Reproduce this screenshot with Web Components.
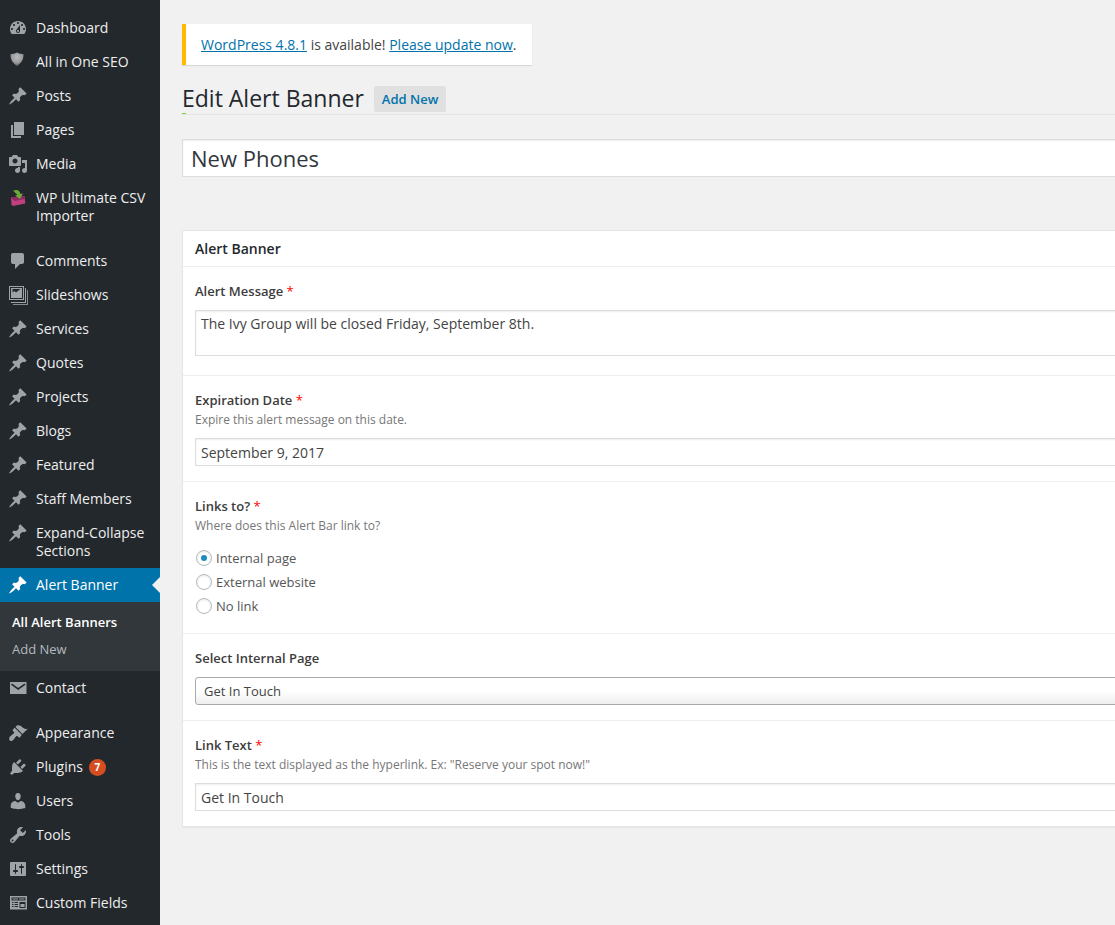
<!DOCTYPE html>
<html lang="en">
<head>
<meta charset="utf-8">
<title>Edit Alert Banner</title>
<style>
html, body { margin: 0; padding: 0; height: 100%; overflow: hidden; background: #f1f1f1; }
body { font-family: "Open Sans", "Liberation Sans", sans-serif; font-size: 13px; color: #444; }
</style>
</head>
<body>
<wp-shell>
  <wp-sidebar slot="side"></wp-sidebar>
  <wp-notice>
    <a href="#">WordPress 4.8.1</a> is available! <a href="#">Please update now</a>.
  </wp-notice>
  <page-head title="Edit Alert Banner" action="Add New"></page-head>
  <title-box>New Phones</title-box>
  <alert-card heading="Alert Banner">
    <field-row label="Alert Message" required>
      <text-box tall>The Ivy Group will be closed Friday, September 8th.</text-box>
    </field-row>
    <field-row label="Expiration Date" hint="Expire this alert message on this date." required>
      <text-box>September 9, 2017</text-box>
    </field-row>
    <field-row label="Links to?" hint="Where does this Alert Bar link to?" required>
      <radio-list selected="Internal page" options="Internal page|External website|No link"></radio-list>
    </field-row>
    <field-row label="Select Internal Page">
      <select-box>Get In Touch</select-box>
    </field-row>
    <field-row label="Link Text" hint='This is the text displayed as the hyperlink. Ex: "Reserve your spot now!"' required last>
      <text-box>Get In Touch</text-box>
    </field-row>
  </alert-card>
</wp-shell>

<script>
const PIN = '<path d="M10.44 3.02l1.82-1.82 6.36 6.35-1.83 1.82c-1.05-.68-2.48-.57-3.41.36l-.75.75c-.92.93-1.04 2.35-.35 3.41l-1.83 1.82-2.41-2.41-2.8 2.79c-.42.42-3.38 2.71-3.8 2.29s1.86-3.39 2.28-3.81l2.79-2.79L4.1 9.36l1.83-1.82c1.05.69 2.48.57 3.4-.36l.75-.75c.93-.92 1.05-2.35.36-3.41z"/>';

const ICONS = {
  dashboard: '<path d="M3.76 16h12.48c1.1-1.37 1.76-3.11 1.76-5 0-4.42-3.58-8-8-8s-8 3.58-8 8c0 1.89.66 3.63 1.76 5zM10 4c.55 0 1 .45 1 1s-.45 1-1 1-1-.45-1-1 .45-1 1-1zM6 6c.55 0 1 .45 1 1s-.45 1-1 1-1-.45-1-1 .45-1 1-1zm8 0c.55 0 1 .45 1 1s-.45 1-1 1-1-.45-1-1 .45-1 1-1zm-5.37 5.55L12 7v6c0 1.1-.9 2-2 2s-2-.9-2-2c0-.57.24-1.08.63-1.45zM4 10c.55 0 1 .45 1 1s-.45 1-1 1-1-.45-1-1 .45-1 1-1zm12 0c.55 0 1 .45 1 1s-.45 1-1 1-1-.45-1-1 .45-1 1-1zm-5 3c0-.55-.45-1-1-1s-1 .45-1 1 .45 1 1 1 1-.45 1-1z" fill-rule="evenodd"/>',
  seo: '<defs><radialGradient id="sh" cx=".5" cy=".35" r=".7"><stop offset="0" stop-color="#b9bbbd"/><stop offset=".6" stop-color="#97999b"/><stop offset="1" stop-color="#4f5153"/></radialGradient></defs><path fill="url(#sh)" d="M9 .5c2 1 4 1.500 6 1.500.4 0 .6.2.6.6 0 5-2.500 9-6.600 11.400-4.100-2.400-6.600-6.400-6.600-11.400 0-.4.2-.6.6-.6 2 0 4-.5 6-1.500z"/>',
  pin: PIN,
  pages: '<path d="M6 15V2h10v13H6zm-1 1h8v2H3V5h2v11z"/>',
  media: '<path d="M13 11V4c0-.55-.45-1-1-1h-1.670L9 1H5L3.670 3H2c-.55 0-1 .45-1 1v7c0 .55.45 1 1 1h10c.55 0 1-.45 1-1zM7 4.500c1.380 0 2.500 1.120 2.500 2.500S8.380 9.500 7 9.500 4.500 8.380 4.500 7 5.620 4.500 7 4.500zM14 6h5v10.500c0 1.380-1.120 2.500-2.500 2.500S14 17.880 14 16.500s1.120-2.500 2.500-2.500c.17 0 .34.02.5.05V9h-3V6zm-4 8.050V13h2v3.500c0 1.380-1.120 2.500-2.500 2.500S7 17.880 7 16.500 8.120 14 9.500 14c.17 0 .34.02.5.05z"/>',
  csv: '<path d="M3 9.500l13.500-1.500.8 7.500L5 18l-1.500-1.500z" fill="#c0407f"/><path d="M3 9.500l3.500 3.500 10.500-2-.5-3z" fill="#8d2a63"/><path d="M5 2.500l4-.5c2 .5 3 2 3.500 4l2.500-.5-3 5.500-5-3.500 2.500-.5C9 6.500 7.500 5 5 2.500z" fill="#6fa83a"/>',
  comments: '<path d="M5 2h9c1.100 0 2 .9 2 2v7c0 1.100-.9 2-2 2h-2l-5 5v-5H5c-1.100 0-2-.9-2-2V4c0-1.100.9-2 2-2z"/>',
  slides: '<path d="M1 1h15v14H1zM2 2v12h13V2z" fill-rule="evenodd"/><path d="M3 3h11v10H3zM4.500 4v3.500l2-1.500 1.500 1.500 4.500-3.500z" fill-rule="evenodd"/><path d="M17 3h1v15H3v-1h14z"/><path d="M19 5h1v15H5v-1h14z" opacity=".8"/>',
  mail: '<path d="M2 4h16.500v12H2z"/><path d="M3.500 6.200L10.200 11l6.800-4.800" fill="none" stroke="#23282d" stroke-width="1.600"/>',
  brush: '<path d="M14.480 11.060L7.410 3.990l1.500-1.500c.5-.56 2.300-.47 3.510.32 1.210.8 1.430 1.280 2.910 2.100 1.180.64 2.450 1.260 4.450.85zm-.71.71L6.700 4.700 4.930 6.470c-.39.39-.39 1.020 0 1.410l1.060 1.060c.39.39.39 1.030 0 1.420-.6.6-1.430 1.110-2.210 1.690-.35.26-.7.53-1.010.84C1.430 13.230.78 15.600 1.440 16.900c.3.59.95 1.070 1.590 1.070.78 0 1.580-.53 2.610-1.560.31-.31.58-.66.84-1.010.58-.78 1.090-1.610 1.690-2.210.39-.39 1.030-.39 1.420 0l1.060 1.060c.39.39 1.020.39 1.410 0z"/>',
  plugin: '<path d="M13.110 4.360L9.870 7.600 8 5.730l3.240-3.240c.35-.34 1.050-.2 1.560.32.52.51.66 1.210.31 1.550zm-8 1.770l.91-1.120 9.010 9.010-1.190.84c-.71.71-2.630 1.160-3.820 1.160H6.140L4.900 17.260c-.59.59-1.540.59-2.120 0-.59-.58-.59-1.530 0-2.120l1.240-1.240v-3.880c0-1.130.4-3.190 1.090-3.890zm7.260 3.970l3.240-3.240c.34-.35 1.040-.21 1.550.31.52.51.66 1.210.31 1.550l-3.240 3.250z"/>',
  users: '<path d="M10 9.250c-2.270 0-2.730-3.440-2.730-3.440C7 4.020 7.820 2 9.970 2c2.160 0 2.980 2.020 2.710 3.810 0 0-.41 3.440-2.680 3.440zm0 2.570L12.720 10c2.390 0 4.520 2.330 4.520 4.530v2.490s-3.650 1.130-7.240 1.130c-3.650 0-7.240-1.130-7.240-1.130v-2.490c0-2.250 1.940-4.480 4.470-4.480z"/>',
  tools: '<path d="M16.680 9.770c-1.340 1.340-3.300 1.670-4.950.99l-5.410 6.520c-.99.99-2.590.99-3.580 0s-.99-2.590 0-3.570l6.520-5.420c-.68-1.650-.35-3.610.99-4.950 1.280-1.280 3.120-1.620 4.720-1.060l-2.890 2.890 2.820 2.820 2.860-2.870c.53 1.580.18 3.390-1.080 4.650zM3.810 16.210c.4.39 1.040.39 1.430 0 .4-.4.4-1.040 0-1.430-.39-.4-1.030-.4-1.430 0-.39.39-.39 1.030 0 1.430z"/>',
  settings: '<path d="M18 16V4c0-.55-.45-1-1-1H3c-.55 0-1 .45-1 1v12c0 .55.45 1 1 1h14c.55 0 1-.45 1-1zM8 11h1c.55 0 1 .45 1 1s-.45 1-1 1H8v1.500c0 .28-.22.5-.5.5s-.5-.22-.5-.5V13H6c-.55 0-1-.45-1-1s.45-1 1-1h1V5.500c0-.28.22-.5.5-.5s.5.22.5.5V11zm5-2h-1c-.55 0-1-.45-1-1s.45-1 1-1h1V5.500c0-.28.22-.5.5-.5s.5.22.5.5V7h1c.55 0 1 .45 1 1s-.45 1-1 1h-1v5.500c0 .28-.22.5-.5.5s-.5-.22-.5-.5V9z"/>',
  fields: '<path d="M2 3h17v13.500H2z"/><path fill="#23282d" d="M3.500 4.500h14v3h-14zM4 9h1.500v1H4zM6.500 9H10v1H6.500zM4 11h1.500v1H4zM6.500 11H10v1H6.500zM4 13h1.500v1H4zM6.500 13H10v1H6.500zM11.500 9h6v6h-6z"/><path d="M4.500 5.500h5.500v1H4.500zM11 5.500h5.500v1H11zM12.500 11h4v3h-4z"/>'
};

// single row of the admin menu
class MenuItem extends HTMLElement {
  constructor() {
    super();
    this.attachShadow({ mode: 'open' });
    this.shadowRoot.innerHTML = `
<style>
:host { display: block; position: relative; color: #eee; }
:host([current]) { background: #0073aa; color: #fff; }
:host([gap]) { margin-bottom: 11px; }
.row { display: flex; align-items: flex-start; padding: 8px 0; line-height: 18px; font-size: 14px; }
.ico { flex: 0 0 36px; display: flex; justify-content: center; height: 18px; }
svg { width: 20px; height: 20px; margin-top: -1px; fill: #9ea3a8; }
:host([current]) svg { fill: #fff; }
.label { flex: 1; padding-right: 6px; }
:host([current])::after {
  content: ""; position: absolute; right: 0; top: 9px;
  border: 8px solid transparent; border-right-color: #f1f1f1; border-left-width: 0;
}
.badge {
  display: inline-block; width: 17px; height: 17px; border-radius: 50%; background: #d54e21; color: #fff;
  font-size: 10px; font-weight: 700; line-height: 17px; text-align: center; vertical-align: top; margin: 1px 0 0 6px;
}
</style>
<div class="row"><span class="ico"></span><span class="label"><slot></slot></span></div>`;
  }
  connectedCallback() {
    const name = this.getAttribute('icon');
    this.shadowRoot.querySelector('.ico').innerHTML = `<svg viewBox="0 0 20 20">${ICONS[name] || ''}</svg>`;
    if (this.hasAttribute('badge')) {
      const b = document.createElement('span');
      b.className = 'badge';
      b.textContent = this.getAttribute('badge');
      this.shadowRoot.querySelector('.label').appendChild(b);
    }
  }
}
customElements.define('menu-item', MenuItem);

class WpSidebar extends HTMLElement {
  constructor() {
    super();
    this.attachShadow({ mode: 'open' });
    const items = [
      ['dashboard', 'Dashboard'], ['seo', 'All in One SEO'], ['pin', 'Posts'], ['pages', 'Pages'], ['media', 'Media'],
      ['csv', 'WP Ultimate CSV Importer', 'gap'],
      ['comments', 'Comments'], ['slides', 'Slideshows'], ['pin', 'Services'], ['pin', 'Quotes'], ['pin', 'Projects'],
      ['pin', 'Blogs'], ['pin', 'Featured'], ['pin', 'Staff Members'], ['pin', 'Expand-Collapse Sections'],
      ['pin', 'Alert Banner', 'current'], ['sub'],
      ['mail', 'Contact', 'gap'],
      ['brush', 'Appearance'], ['plugin', 'Plugins', 'badge'], ['users', 'Users'], ['tools', 'Tools'],
      ['settings', 'Settings'], ['fields', 'Custom Fields']
    ];
    const html = items.map(([icon, label, flag]) => {
      if (icon === 'sub') return `<div class="sub"><a class="on">All Alert Banners</a><a>Add New</a></div>`;
      const attr = flag === 'badge' ? 'badge="7"' : (flag || '');
      return `<menu-item icon="${icon}" ${attr}>${label}</menu-item>`;
    }).join('');
    this.shadowRoot.innerHTML = `
<style>
:host { display: block; width: 160px; height: 100%; background: #23282d; padding-top: 11px; box-sizing: border-box; }
.sub { background: #32373c; padding: 7px 0 8px; }
.sub a { display: block; padding: 0 12px; font-size: 13px; line-height: 27px; color: #b4b9be; }
.sub a.on { color: #fff; font-weight: 600; }
</style>${html}`;
  }
}
customElements.define('wp-sidebar', WpSidebar);

class WpShell extends HTMLElement {
  constructor() {
    super();
    this.attachShadow({ mode: 'open' });
    this.shadowRoot.innerHTML = `
<style>
:host { display: flex; height: 925px; width: 100%; overflow: hidden; }
.side { flex: 0 0 160px; }
main { flex: 0 0 1100px; margin-left: 22px; padding-top: 24px; box-sizing: border-box; }
</style>
<div class="side"><slot name="side"></slot></div>
<main><slot></slot></main>`;
  }
}
customElements.define('wp-shell', WpShell);

class WpNotice extends HTMLElement {
  constructor() {
    super();
    this.attachShadow({ mode: 'open' });
    this.shadowRoot.innerHTML = `
<style>
:host { display: block; width: max-content; height: 41px; box-sizing: border-box; background: #fff;
  border-left: 4px solid #ffb900; box-shadow: 0 1px 1px rgba(0,0,0,.1); padding: 11px 16px 0 15px; font-size: 14px; line-height: 20px; color: #444; }
::slotted(a) { color: #0073aa; text-decoration: underline; }
</style><slot></slot>`;
  }
}
customElements.define('wp-notice', WpNotice);

class PageHead extends HTMLElement {
  constructor() {
    super();
    this.attachShadow({ mode: 'open' });
    this.shadowRoot.innerHTML = `
<style>
:host { display: block; }
.top { display: flex; align-items: flex-start; height: 26px; margin-top: 21px; }
h1 { margin: -1px 0 0; font-size: 23px; font-weight: 400; line-height: 26px; color: #23282d; }
a { margin-left: 10px; height: 26px; line-height: 26px; padding: 0 8px; border-radius: 2px; background: #e0e0e0;
  color: #0073aa; font-size: 13px; font-weight: 600; }
.rule { display: flex; height: 2px; margin-top: 1px; }
.rule i { flex: 0 0 4px; background: #7ad03a; height: 1px; }
.rule b { flex: 1; background: #e5e5e5; margin-top: 1px; height: 1px; margin-left: -4px; }
</style>
<div class="top"><h1></h1><a></a></div>
<div class="rule"><i></i><b></b></div>`;
  }
  connectedCallback() {
    this.shadowRoot.querySelector('h1').textContent = this.getAttribute('title');
    this.shadowRoot.querySelector('a').textContent = this.getAttribute('action');
  }
}
customElements.define('page-head', PageHead);

class TitleBox extends HTMLElement {
  constructor() {
    super();
    this.attachShadow({ mode: 'open' });
    this.shadowRoot.innerHTML = `
<style>
:host { display: block; margin-top: 24px; height: 38px; box-sizing: border-box; background: #fff; border: 1px solid #ddd;
  box-shadow: inset 0 1px 2px rgba(0,0,0,.07); padding: 0 8px; font-size: 22px; line-height: 36px; color: #32373c; }
</style><slot></slot>`;
  }
}
customElements.define('title-box', TitleBox);

class AlertCard extends HTMLElement {
  constructor() {
    super();
    this.attachShadow({ mode: 'open' });
    this.shadowRoot.innerHTML = `
<style>
:host { display: block; margin-top: 53px; background: #fff; border: 1px solid #e5e5e5; box-shadow: 0 1px 1px rgba(0,0,0,.04); }
h2 { margin: 0; box-sizing: border-box; padding: 9px 12px 0; font-size: 14px; line-height: 18px; font-weight: 600; color: #23282d;
  border-bottom: 1px solid #eee; height: 36px; }
</style>
<h2></h2><slot></slot>`;
  }
  connectedCallback() {
    this.shadowRoot.querySelector('h2').textContent = this.getAttribute('heading');
  }
}
customElements.define('alert-card', AlertCard);

class FieldRow extends HTMLElement {
  constructor() {
    super();
    this.attachShadow({ mode: 'open' });
    this.shadowRoot.innerHTML = `
<style>
:host { display: block; padding: 15px 12px; border-bottom: 1px solid #eee; }
:host([last]) { border-bottom: 0; }
label { display: block; font-size: 13px; line-height: 18px; font-weight: 600; color: #3d3d3d; margin-bottom: 10px; }
label span { color: #f00; font-weight: 400; font-size: 13px; }
p { margin: -8px 0 9px; font-size: 12px; line-height: 18px; color: #777; }
p:empty { display: none; }
</style>
<label></label><p></p><slot></slot>`;
  }
  connectedCallback() {
    const label = this.shadowRoot.querySelector('label');
    label.textContent = this.getAttribute('label');
    if (this.hasAttribute('required')) {
      const star = document.createElement('span');
      star.textContent = ' *';
      label.appendChild(star);
    }
    this.shadowRoot.querySelector('p').textContent = this.getAttribute('hint') || '';
  }
}
customElements.define('field-row', FieldRow);

class TextBox extends HTMLElement {
  constructor() {
    super();
    this.attachShadow({ mode: 'open' });
    this.shadowRoot.innerHTML = `
<style>
:host { display: block; height: 28px; box-sizing: border-box; background: #fff; border: 1px solid #ddd;
  box-shadow: inset 0 1px 2px rgba(0,0,0,.07); padding: 1px 5px 0; font-size: 14px; line-height: 26px; color: #444; }
:host([tall]) { height: 46px; margin-bottom: 4px; padding-top: 0; }
</style><slot></slot>`;
  }
}
customElements.define('text-box', TextBox);

class SelectBox extends HTMLElement {
  constructor() {
    super();
    this.attachShadow({ mode: 'open' });
    this.shadowRoot.innerHTML = `
<style>
:host { display: block; height: 28px; box-sizing: border-box; border: 1px solid #aaa; border-radius: 3px;
  background: linear-gradient(#fff 50%, #eee); padding: 0 8px; font-size: 13px; line-height: 26px; color: #444; }
</style><slot></slot>`;
  }
}
customElements.define('select-box', SelectBox);

class RadioList extends HTMLElement {
  constructor() {
    super();
    this.attachShadow({ mode: 'open' });
    this.shadowRoot.innerHTML = `
<style>
:host { display: block; margin-top: 11px; }
div { display: flex; align-items: center; height: 24px; font-size: 13px; color: #555; }
i { width: 16px; height: 16px; box-sizing: border-box; margin: 0 4px 0 1px; border: 1px solid #b4b9be; border-radius: 50%;
  background: #fff; box-shadow: inset 0 1px 2px rgba(0,0,0,.1); display: flex; align-items: center; justify-content: center; }
i.on::before { content: ""; width: 6px; height: 6px; border-radius: 50%; background: #1e8cbe; }
</style>`;
  }
  connectedCallback() {
    const selected = this.getAttribute('selected');
    this.getAttribute('options').split('|').forEach(opt => {
      const row = document.createElement('div');
      row.innerHTML = `<i class="${opt === selected ? 'on' : ''}"></i><span>${opt}</span>`;
      this.shadowRoot.appendChild(row);
    });
  }
}
customElements.define('radio-list', RadioList);
</script>
</body>
</html>
